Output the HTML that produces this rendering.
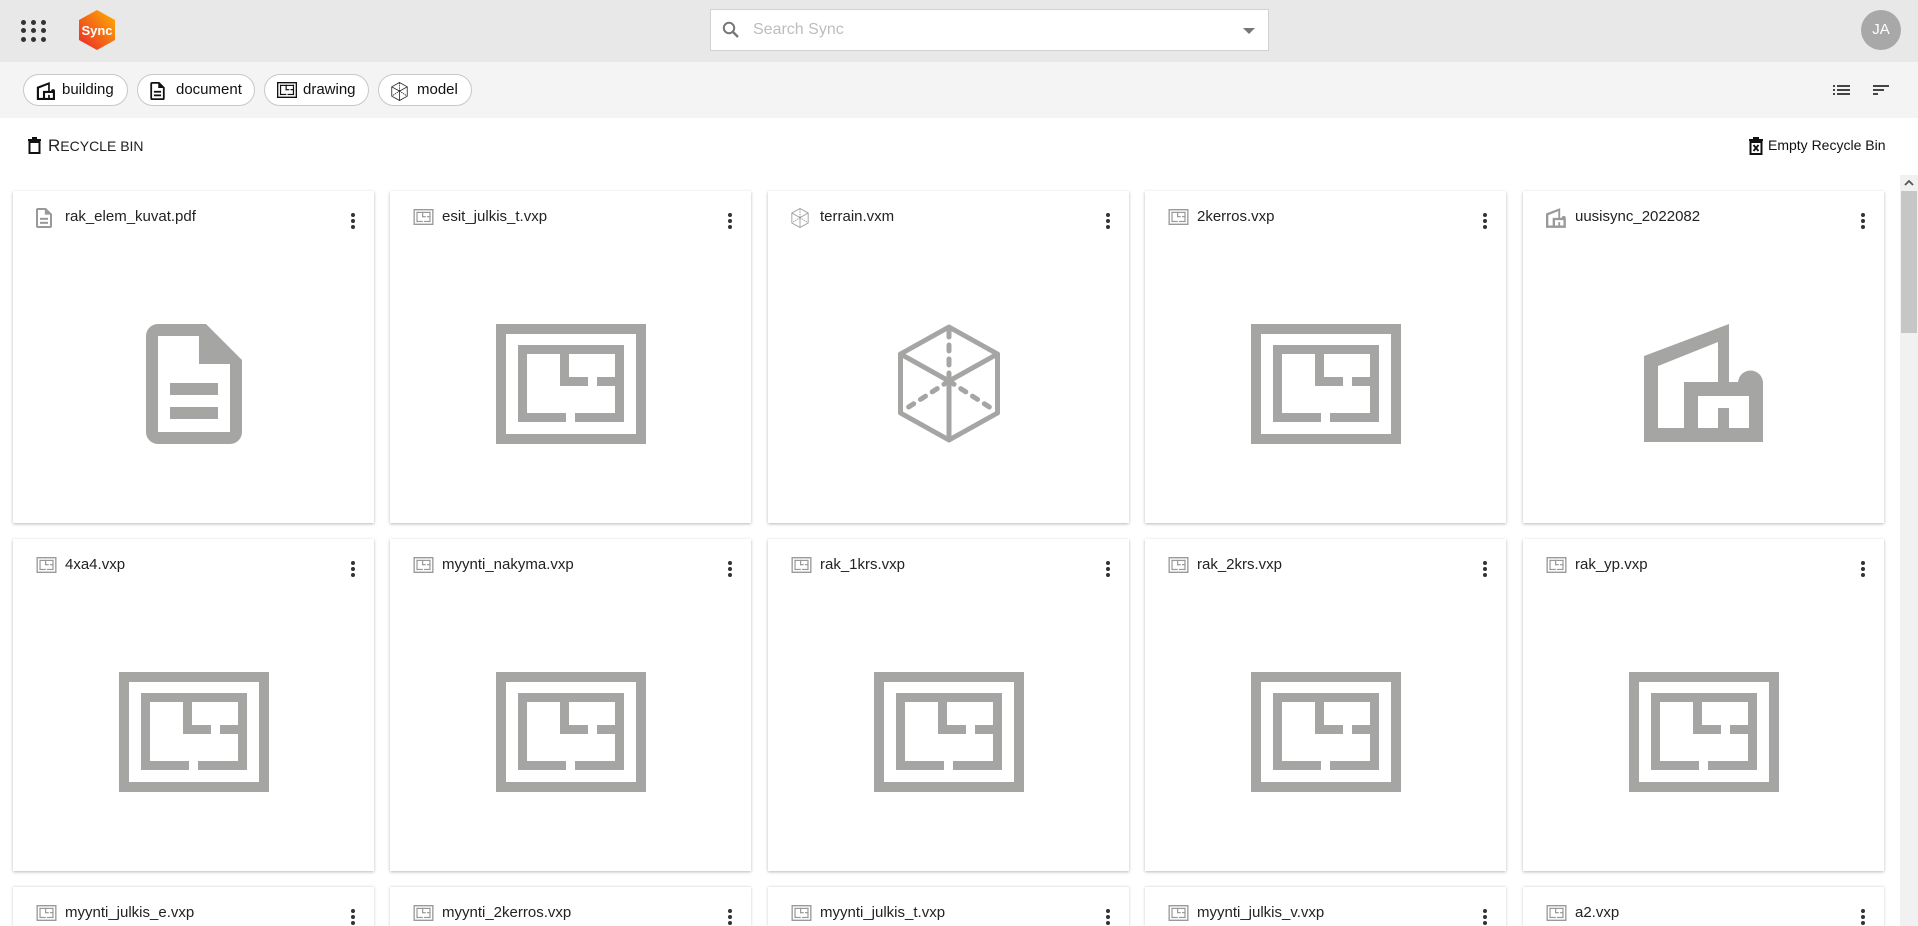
<!DOCTYPE html>
<html style="height:926px;overflow:hidden"><head><meta charset="utf-8"><style>
*{box-sizing:border-box;margin:0;padding:0}
html,body{height:926px;overflow:hidden}
body{width:1918px;background:#fff;font-family:"Liberation Sans",Arial,sans-serif;color:#222;position:relative}
#wrap{position:relative;width:1918px;height:926px;overflow:hidden}
.hdr{position:absolute;left:0;top:0;width:1918px;height:62px;background:#e8e8e8}
.tb{position:absolute;left:0;top:62px;width:1918px;height:56px;background:#f4f4f4}
.dot{position:absolute;width:5px;height:5px;border-radius:50%;background:#333}
.search{position:absolute;left:710px;top:9px;width:559px;height:42px;background:#fff;border:1px solid #d2d2d2}
.search span{position:absolute;left:42px;top:11px;font-size:16px;color:#bdbdbd}
.avatar{position:absolute;left:1861px;top:10px;width:40px;height:40px;border-radius:50%;background:#a8a8a8;color:#fff;font-size:15px;text-align:center;line-height:40px}
.chip{position:absolute;top:74px;height:32px;border:1px solid #c8c8c8;border-radius:16px;background:#fff;font-size:15px;line-height:30px;padding-left:38px;color:#111}
.chip svg{position:absolute;left:12px;top:7px}
.card{position:absolute;width:361px;height:332px;background:#fff;box-shadow:0 1px 3px rgba(0,0,0,.28);overflow:hidden}
.card.r3{height:39px;box-shadow:0 0 3px rgba(0,0,0,.2)}
.card .t{position:absolute;left:52px;top:16px;font-size:15px;color:#222;line-height:20px}
.card .si{position:absolute;left:23px;top:17px}
.card .k{position:absolute;left:338px;top:22px;width:4px}
.card .k i{display:block;width:4px;height:4px;border-radius:50%;background:#333;margin-bottom:2px}
.card .big{position:absolute;left:50%;top:133px;transform:translateX(-50%)}
.sb{position:absolute;left:1900px;top:175px;width:18px;height:751px;background:#f1f1f1}
.sb .th{position:absolute;left:1px;top:16px;width:16px;height:142px;background:#c6c6c6}
</style></head><body><div id="wrap">
<div class="hdr">
<div class="dot" style="left:21px;top:20px"></div><div class="dot" style="left:31px;top:20px"></div><div class="dot" style="left:41px;top:20px"></div>
<div class="dot" style="left:21px;top:28px"></div><div class="dot" style="left:31px;top:28px"></div><div class="dot" style="left:41px;top:28px"></div>
<div class="dot" style="left:21px;top:37px"></div><div class="dot" style="left:31px;top:37px"></div><div class="dot" style="left:41px;top:37px"></div>
<svg style="position:absolute;left:76px;top:9px" width="42" height="42" viewBox="0 0 42 42"><defs><linearGradient id="g" x1="0" y1="1" x2="1" y2="0"><stop offset="0" stop-color="#e8262b"/><stop offset="1" stop-color="#ffb300"/></linearGradient></defs><polygon points="21,1 39,11 39,31 21,41 3,31 3,11" fill="url(#g)"/><text x="21" y="26" text-anchor="middle" font-family="Liberation Sans Narrow,Liberation Sans,sans-serif" font-size="13" font-weight="bold" fill="#fff">Sync</text></svg>
<div class="search"><svg style="position:absolute;left:11px;top:11px" width="18" height="18" viewBox="0 0 18 18"><circle cx="7" cy="7" r="5.2" fill="none" stroke="#777" stroke-width="2"/><path d="M11 11l5 5" stroke="#777" stroke-width="2.4"/></svg><span>Search Sync</span><svg style="position:absolute;left:532px;top:18px" width="12" height="6"><polygon points="0,0 12,0 6,6" fill="#777"/></svg></div>
<div class="avatar">JA</div>
</div>
<div class="tb">
<svg style="position:absolute;left:1833px;top:23px" width="17" height="10"><g fill="#444"><rect x="0" y="0" width="2" height="2"/><rect x="0" y="4" width="2" height="2"/><rect x="0" y="8" width="2" height="2"/><rect x="4" y="0" width="13" height="2"/><rect x="4" y="4" width="13" height="2"/><rect x="4" y="8" width="13" height="2"/></g></svg>
<svg style="position:absolute;left:1873px;top:23px" width="16" height="10"><g fill="#444"><rect x="0" y="0" width="16" height="2"/><rect x="0" y="4" width="11" height="2"/><rect x="0" y="8" width="5" height="2"/></g></svg>
</div>
<div class="chip" style="left:23px;width:105px"><svg width="20" height="18" viewBox="0 0 120 118"><path fill="#111" fill-rule="evenodd" d="M0 32L85 0V58H94V59A12.5 12.5 0 0 1 119 59V118H0Z M14 42L74 18V58H40V104H14Z M54 72H105V104H85V84H74V104H54Z"/></svg>building</div>
<div class="chip" style="left:137px;width:118px"><svg width="15" height="18" viewBox="0 0 96 120"><path fill="#111" fill-rule="evenodd" d="M12 0H60L96 36V108A12 12 0 0 1 84 120H12A12 12 0 0 1 0 108V12A12 12 0 0 1 12 0Z M12 12H53V40H84V108H12Z"/><rect x="24" y="59" width="48" height="12" fill="#111"/><rect x="24" y="83" width="48" height="12" fill="#111"/></svg>document</div>
<div class="chip" style="left:264px;width:105px"><svg width="20" height="16" viewBox="0 0 150 120"><use href="#dr" fill="#111"/></svg>drawing</div>
<div class="chip" style="left:378px;width:94px"><svg width="17" height="19" viewBox="0 0 103 119"><use href="#cb" stroke="#222"/></svg>model</div>

<svg width="0" height="0" style="position:absolute"><defs>
<g id="dr"><path fill-rule="evenodd" d="M0 0H150V120H0Z M10 10H140V110H10Z"/><rect x="22" y="21" width="106" height="9"/><rect x="22" y="21" width="9" height="77"/><rect x="119" y="21" width="9" height="77"/><rect x="22" y="89" width="48" height="9"/><rect x="79" y="89" width="49" height="9"/><rect x="64" y="21" width="9" height="41"/><rect x="64" y="53" width="28" height="9"/><rect x="101" y="53" width="27" height="9"/></g>
<g id="cb" fill="none" stroke-width="5" stroke-linejoin="round" stroke-linecap="round"><polygon points="51.5,3 100,30 100,89 51.5,116 3,89 3,30"/><polyline points="3,30 51.5,57 100,30"/><line x1="51.5" y1="57" x2="51.5" y2="116"/><g stroke-dasharray="6 8"><line x1="51.5" y1="7" x2="51.5" y2="57"/><line x1="51.5" y1="57" x2="5" y2="87"/><line x1="51.5" y1="57" x2="98" y2="87"/></g></g>
<g id="bd"><path fill-rule="evenodd" d="M0 32L85 0V58H94V59A12.5 12.5 0 0 1 119 59V118H0Z M14 42L74 18V58H40V104H14Z M54 72H105V104H85V84H74V104H54Z"/></g>
<g id="dc"><path fill-rule="evenodd" d="M12 0H60L96 36V108A12 12 0 0 1 84 120H12A12 12 0 0 1 0 108V12A12 12 0 0 1 12 0Z M12 12H53V40H84V108H12Z"/><rect x="24" y="59" width="48" height="12"/><rect x="24" y="83" width="48" height="12"/></g>
</defs></svg>

<svg style="position:absolute;left:28px;top:137px" width="13" height="17" viewBox="0 0 13 17"><rect x="0" y="2" width="13" height="2" fill="#111"/><rect x="4" y="0" width="5" height="2" fill="#111"/><rect x="1.5" y="5" width="10" height="11" fill="none" stroke="#111" stroke-width="2"/></svg>
<div style="position:absolute;left:48px;top:136px;font-size:17px;color:#222">R<span style="font-size:14px">ECYCLE BIN</span></div>
<svg style="position:absolute;left:1749px;top:137px" width="14" height="18" viewBox="0 0 14 18"><rect x="0" y="2" width="14" height="2" fill="#111"/><rect x="4" y="0" width="6" height="2" fill="#111"/><rect x="1.5" y="5" width="11" height="12" fill="none" stroke="#111" stroke-width="2"/><path d="M4.5 8l5 6M9.5 8l-5 6" stroke="#111" stroke-width="1.8"/></svg>
<div style="position:absolute;left:1768px;top:137px;font-size:14px;color:#111">Empty Recycle Bin</div>

<div class="sb"><svg style="position:absolute;left:4px;top:5px" width="10" height="6"><path d="M1 5L5 1L9 5" fill="none" stroke="#555" stroke-width="1.8"/></svg><div class="th"></div></div>

<div class="card" style="left:13px;top:191px"><svg class="si" width="16" height="20" viewBox="0 0 96 120"><use href="#dc" fill="#999"/></svg><div class="t">rak_elem_kuvat.pdf</div><div class="k"><i></i><i></i><i></i></div><svg class="big" width="96" height="120" viewBox="0 0 96 120"><use href="#dc" fill="#a5a5a4"/></svg></div>
<div class="card" style="left:390px;top:191px"><svg class="si" style="top:18px" width="21" height="16" viewBox="0 0 150 120"><use href="#dr" fill="#999"/></svg><div class="t">esit_julkis_t.vxp</div><div class="k"><i></i><i></i><i></i></div><svg class="big" width="150" height="120" viewBox="0 0 150 120"><use href="#dr" fill="#a5a5a4"/></svg></div>
<div class="card" style="left:768px;top:191px"><svg class="si" width="18" height="20" viewBox="0 0 103 119"><use href="#cb" stroke="#999"/></svg><div class="t">terrain.vxm</div><div class="k"><i></i><i></i><i></i></div><svg class="big" width="103" height="119" viewBox="0 0 103 119"><use href="#cb" stroke="#a5a5a4"/></svg></div>
<div class="card" style="left:1145px;top:191px"><svg class="si" style="top:18px" width="21" height="16" viewBox="0 0 150 120"><use href="#dr" fill="#999"/></svg><div class="t">2kerros.vxp</div><div class="k"><i></i><i></i><i></i></div><svg class="big" width="150" height="120" viewBox="0 0 150 120"><use href="#dr" fill="#a5a5a4"/></svg></div>
<div class="card" style="left:1523px;top:191px"><svg class="si" width="20" height="20" viewBox="0 0 120 118"><use href="#bd" fill="#999"/></svg><div class="t">uusisync_2022082</div><div class="k"><i></i><i></i><i></i></div><svg class="big" width="120" height="118" viewBox="0 0 120 118"><use href="#bd" fill="#a5a5a4"/></svg></div>

<div class="card" style="left:13px;top:539px"><svg class="si" style="top:18px" width="21" height="16" viewBox="0 0 150 120"><use href="#dr" fill="#999"/></svg><div class="t">4xa4.vxp</div><div class="k"><i></i><i></i><i></i></div><svg class="big" width="150" height="120" viewBox="0 0 150 120"><use href="#dr" fill="#a5a5a4"/></svg></div>
<div class="card" style="left:390px;top:539px"><svg class="si" style="top:18px" width="21" height="16" viewBox="0 0 150 120"><use href="#dr" fill="#999"/></svg><div class="t">myynti_nakyma.vxp</div><div class="k"><i></i><i></i><i></i></div><svg class="big" width="150" height="120" viewBox="0 0 150 120"><use href="#dr" fill="#a5a5a4"/></svg></div>
<div class="card" style="left:768px;top:539px"><svg class="si" style="top:18px" width="21" height="16" viewBox="0 0 150 120"><use href="#dr" fill="#999"/></svg><div class="t">rak_1krs.vxp</div><div class="k"><i></i><i></i><i></i></div><svg class="big" width="150" height="120" viewBox="0 0 150 120"><use href="#dr" fill="#a5a5a4"/></svg></div>
<div class="card" style="left:1145px;top:539px"><svg class="si" style="top:18px" width="21" height="16" viewBox="0 0 150 120"><use href="#dr" fill="#999"/></svg><div class="t">rak_2krs.vxp</div><div class="k"><i></i><i></i><i></i></div><svg class="big" width="150" height="120" viewBox="0 0 150 120"><use href="#dr" fill="#a5a5a4"/></svg></div>
<div class="card" style="left:1523px;top:539px"><svg class="si" style="top:18px" width="21" height="16" viewBox="0 0 150 120"><use href="#dr" fill="#999"/></svg><div class="t">rak_yp.vxp</div><div class="k"><i></i><i></i><i></i></div><svg class="big" width="150" height="120" viewBox="0 0 150 120"><use href="#dr" fill="#a5a5a4"/></svg></div>

<div class="card r3" style="left:13px;top:887px"><svg class="si" style="top:18px" width="21" height="16" viewBox="0 0 150 120"><use href="#dr" fill="#999"/></svg><div class="t">myynti_julkis_e.vxp</div><div class="k"><i></i><i></i><i></i></div></div>
<div class="card r3" style="left:390px;top:887px"><svg class="si" style="top:18px" width="21" height="16" viewBox="0 0 150 120"><use href="#dr" fill="#999"/></svg><div class="t">myynti_2kerros.vxp</div><div class="k"><i></i><i></i><i></i></div></div>
<div class="card r3" style="left:768px;top:887px"><svg class="si" style="top:18px" width="21" height="16" viewBox="0 0 150 120"><use href="#dr" fill="#999"/></svg><div class="t">myynti_julkis_t.vxp</div><div class="k"><i></i><i></i><i></i></div></div>
<div class="card r3" style="left:1145px;top:887px"><svg class="si" style="top:18px" width="21" height="16" viewBox="0 0 150 120"><use href="#dr" fill="#999"/></svg><div class="t">myynti_julkis_v.vxp</div><div class="k"><i></i><i></i><i></i></div></div>
<div class="card r3" style="left:1523px;top:887px"><svg class="si" style="top:18px" width="21" height="16" viewBox="0 0 150 120"><use href="#dr" fill="#999"/></svg><div class="t">a2.vxp</div><div class="k"><i></i><i></i><i></i></div></div>
</div></body></html>
